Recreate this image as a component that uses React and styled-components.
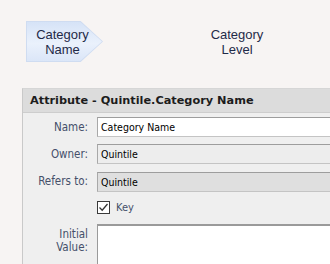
import React from "react";
import styled, { createGlobalStyle } from "styled-components";

const Global = createGlobalStyle`
  html, body { margin: 0; padding: 0; background: #f7f4f3; }
  #root { width: 330px; height: 264px; overflow: hidden; }
`;

const ui = `"DejaVu Sans Condensed", "DejaVu Sans", sans-serif`;

const Page = styled.div`
  display: flex;
  flex-direction: column;
  width: 330px;
  height: 264px;
  background: #f7f4f3;
`;

const Diagram = styled.div`
  display: flex;
  flex-shrink: 0;
  align-items: flex-start;
  height: 88px;
  box-sizing: border-box;
  padding: 21px 0 0 26px;
  font-family: "Liberation Sans", Arial, sans-serif;
  font-size: 13px;
  line-height: 15px;
  color: #1f2a48;
`;

const Shape = styled.div`
  width: 77px;
  height: 41px;
  padding: 1px;
  box-sizing: border-box;
  background: #cfdcf1;
  clip-path: polygon(0 0, 71% 0, 100% 50%, 71% 100%, 0 100%);
`;

const ShapeFill = styled.div`
  display: flex;
  align-items: center;
  justify-content: center;
  height: 100%;
  padding-right: 4px;
  text-align: center;
  background: linear-gradient(180deg, #d6e3f7 0%, #eaf1fc 55%, #dbe6f8 100%);
  clip-path: polygon(0 0, 71% 0, 100% 50%, 71% 100%, 0 100%);
`;

const LevelLabel = styled.div`
  width: 100px;
  margin-left: 84px;
  padding-top: 6px;
  text-align: center;
`;

const Panel = styled.div`
  flex: 1;
  min-height: 0;
  margin-left: 22px;
  display: flex;
  flex-direction: column;
  background: #efefef;
  border-left: 1px solid #c9c9c9;
  border-top: 1px solid #d6d6d6;
  font-family: ${ui};
  font-size: 10.5px;
`;

const PanelHeader = styled.div`
  flex-shrink: 0;
  height: 23px;
  line-height: 23px;
  padding-left: 7px;
  background: #dcdcdc;
  border-bottom: 1px solid #cdcdcd;
  font-family: "DejaVu Sans", sans-serif;
  font-size: 11.3px;
  font-weight: bold;
  color: #1c1c1c;
  white-space: nowrap;
`;

const Form = styled.div`
  display: grid;
  grid-template-columns: 74px 1fr;
  row-gap: 7px;
  padding-top: 4px;
`;

const Label = styled.div`
  text-align: right;
  padding-right: 9px;
  font-size: 11.5px;
  line-height: ${(p) => (p.multi ? "13px" : "20px")};
  padding-top: ${(p) => (p.multi ? "4px" : "0")};
  color: #45506a;
  white-space: nowrap;
`;

const Field = styled.div`
  height: 20px;
  box-sizing: border-box;
  line-height: 18px;
  padding-left: 3px;
  margin-top: ${(p) => (p.kind === "disabled" ? "1px" : "0")};
  border-top: 1px solid #9d9d9d;
  border-left: 1px solid #a8a8a8;
  border-bottom: 1px solid #c4c4c4;
  background: ${(p) =>
    p.kind === "edit" ? "#ffffff" : p.kind === "disabled" ? "#dfdfdf" : "#ededed"};
  color: #000;
  white-space: nowrap;
`;

const CheckRow = styled.label`
  grid-column: 2;
  display: flex;
  align-items: center;
  gap: 6px;
  height: 14px;
  margin: 1px 0 3px;
  font-size: 11px;
  color: #45506a;
`;

const Box = styled.span`
  width: 13px;
  height: 13px;
  box-sizing: border-box;
  border: 1px solid #3a3a3a;
  background: #fff;
  display: flex;
  align-items: center;
  justify-content: center;
`;

const TextArea = styled.div`
  height: 60px;
  background: #fff;
  border-top: 2px solid #9a9a9a;
  border-left: 1px solid #9a9a9a;
`;

export default function App() {
  return (
    <>
      <Global />
      <Page>
        <Diagram>
          <Shape>
            <ShapeFill>
              Category
              <br />
              Name
            </ShapeFill>
          </Shape>
          <LevelLabel>
            Category
            <br />
            Level
          </LevelLabel>
        </Diagram>
        <Panel>
          <PanelHeader>Attribute - Quintile.Category Name</PanelHeader>
          <Form>
            <Label>Name:</Label>
            <Field kind="edit">Category Name</Field>
            <Label>Owner:</Label>
            <Field kind="readonly">Quintile</Field>
            <Label>Refers to:</Label>
            <Field kind="disabled">Quintile</Field>
            <CheckRow>
              <Box>
                <svg width="11" height="11" viewBox="0 0 11 11">
                  <path d="M1.5 5.5 L4.2 8.2 L9.5 2" fill="none" stroke="#333" strokeWidth="1.3" />
                </svg>
              </Box>
              Key
            </CheckRow>
            <Label multi>
              Initial
              <br />
              Value:
            </Label>
            <TextArea />
          </Form>
        </Panel>
      </Page>
    </>
  );
}
